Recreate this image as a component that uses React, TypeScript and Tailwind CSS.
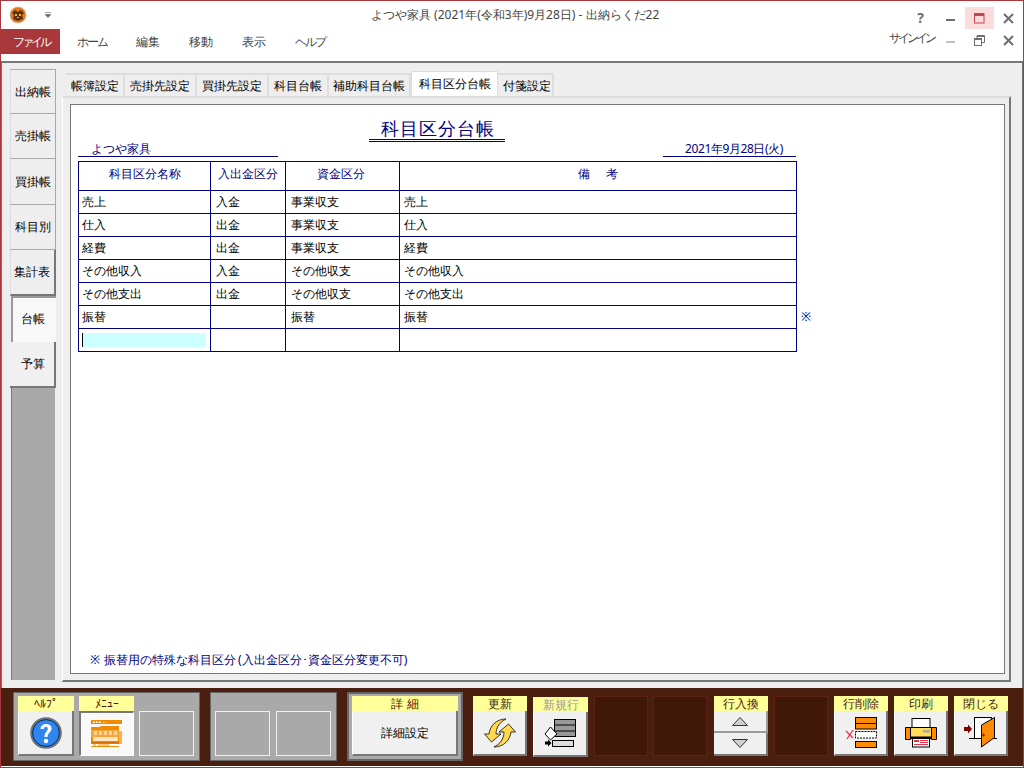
import React from "react"

const font = "[font-family:'Noto_Sans_CJK_JP','Liberation_Sans',sans-serif] [font-feature-settings:'palt']"

const dither = "bg-[repeating-conic-gradient(#f2f2f2_0_25%,#ffffff_0_50%)] bg-[length:2px_2px]"

function AppIcon() {
  return (
    <svg width="18" height="18" viewBox="0 0 18 18">
      <circle cx="9" cy="9" r="8" fill="#e8761a" />
      <circle cx="9" cy="9" r="8" fill="none" stroke="#c9b8a8" strokeWidth="0.8" />
      <path d="M3 7 L6 4 L9 6 L12 4 L15 7 L13 9 L14 13 L9 15 L4 13 L5 9 Z" fill="#5a3210" />
      <path d="M6 8h2v2H6zM10 8h2v2h-2zM8 11h2v1H8z" fill="#f2b640" />
    </svg>
  )
}

function WinGlyph({ type }: { type: string }) {
  if (type === "help") return <span className="text-[14px] font-bold leading-none text-[#6e6e6e] [font-family:'Liberation_Sans',sans-serif]">?</span>
  if (type === "min") return <span className="mt-[3px] block h-[2px] w-[9px] bg-[#6e6e6e]" />
  if (type === "minOff") return <span className="mt-[3px] block h-[2px] w-[9px] bg-[#c0c0c0]" />
  if (type === "close")
    return (
      <svg width="11" height="11" viewBox="0 0 11 11">
        <path d="M1 1 L10 10 M10 1 L1 10" stroke="#6e6e6e" strokeWidth="2" />
      </svg>
    )
  if (type === "max")
    return (
      <svg width="11" height="11" viewBox="0 0 11 11">
        <rect x="0.5" y="0.5" width="9.5" height="9.5" fill="none" stroke="#c2474c" />
        <rect x="0" y="0" width="10" height="3" fill="#c2474c" />
      </svg>
    )
  return (
    <svg width="11" height="11" viewBox="0 0 11 11">
      <rect x="0.5" y="3.5" width="7" height="7" fill="none" stroke="#6e6e6e" />
      <path d="M3 3.5V0.5H10.5V7.5H8" fill="none" stroke="#6e6e6e" />
      <path d="M0.5 4.5h7M3 1.5h7" stroke="#6e6e6e" />
    </svg>
  )
}

function HelpIcon() {
  return (
    <svg width="32" height="32" viewBox="0 0 32 32">
      <circle cx="16" cy="16" r="15" fill="#2e86f0" stroke="#6f6f6f" strokeWidth="1.6" />
      <circle cx="16" cy="16" r="13.4" fill="none" stroke="#111" strokeWidth="0.8" />
      <path d="M10.5 12 C10.5 5.5 21.5 5.5 21.5 11.5 C21.5 15.5 17.5 15.5 17.5 20 H14.5 C14.5 14.5 17.8 14.5 17.8 11.5 C17.8 9 14 9 14 12 Z" fill="#fff" />
      <circle cx="16" cy="24" r="2.2" fill="#fff" />
    </svg>
  )
}

function MenuIcon() {
  return (
    <svg width="32" height="28" viewBox="0 0 32 28">
      <rect x="0" y="0" width="31" height="4" fill="#f08c00" />
      <path d="M2 1.5h2v1.5H2zM5 1.5h2v1.5H5zM8 1.5h2v1.5H8zM12 2h1v1h-1zM14 2h1v1h-1z" fill="#fff" />
      <path d="M0 7h8l2 -1h18v21H0z" fill="#f08c00" />
      <rect x="0" y="10" width="28" height="7" fill="#f7a73a" />
      <path d="M3 11h3v4H3zM8 11h3v4H8zM13 11h3v4h-3zM18 11h3v4h-3zM23 11h3v4h-3z" fill="#fcd596" />
      <rect x="2" y="17" width="25" height="4" fill="#fde6bf" />
      <rect x="0" y="24" width="28" height="2" fill="#fff" />
      <rect x="0" y="22" width="28" height="1.5" fill="#d96f00" />
      <path d="M2 24.500h3v1H2zM7 24.500h11v1H7z" fill="#e88a10" />
      <path d="M28 11h3v13h-3z" fill="#fbb04a" />
    </svg>
  )
}

function RefreshIcon() {
  const arrow = "M22 1 C12 1 6 8 5 16 H0.500 L7.500 24 L17 16 H12 C12 9 16 4 22 1 Z"
  return (
    <svg width="32" height="30" viewBox="0 0 32 30">
      <path d={arrow} fill="#ffd94a" stroke="#222" strokeWidth="0.900" />
      <path d={arrow} transform="rotate(180 16 15)" fill="#ffd94a" stroke="#222" strokeWidth="0.900" />
    </svg>
  )
}

function NewRowIcon() {
  return (
    <svg width="33" height="30" viewBox="0 0 33 30">
      <rect x="10.5" y="0.5" width="21" height="17" fill="#999" stroke="#000" />
      <path d="M10.5 6h21M10.5 12h21" stroke="#000" />
      <path d="M6.5 8 L13 15 L6.5 21 L1 15 Z" fill="#fff" stroke="#000" />
      <rect x="8.5" y="21.5" width="21" height="6" fill="#ddd" stroke="#000" />
      <path d="M1 22.5h3v-2l3.5 3.5l-3.500 3.500v-2h-3z" fill="#000" />
    </svg>
  )
}

function DeleteRowIcon() {
  return (
    <svg width="32" height="31" viewBox="0 0 32 31">
      <rect x="10.500" y="0.500" width="21" height="11.500" fill="#ff8a00" stroke="#000" />
      <path d="M10.500 6.500h21" stroke="#000" />
      <rect x="10.500" y="14.500" width="21" height="6.500" fill="#fff" stroke="#000" strokeDasharray="2 1" />
      <rect x="10.500" y="24.500" width="21" height="6" fill="#ff8a00" stroke="#000" />
      <path d="M1 14 L8 21 M8 13 L2 22" stroke="#f0304a" strokeWidth="1.300" fill="none" />
    </svg>
  )
}

function PrintIcon() {
  return (
    <svg width="32" height="30" viewBox="0 0 32 30">
      <rect x="7" y="0.500" width="18" height="11" fill="#fff" stroke="#000" />
      <path d="M0.500 9.500h5v12h-5z" fill="#ff8a00" stroke="#000" />
      <path d="M26.500 9.500h5v12h-5z" fill="#ff8a00" stroke="#000" />
      <rect x="5.500" y="9.500" width="21" height="11" fill="#ffdb58" stroke="#000" />
      <rect x="18" y="12" width="7" height="2.500" fill="#aaa" />
      <rect x="5.500" y="18.500" width="21" height="2.500" fill="#000" />
      <rect x="7.500" y="20.500" width="17" height="8.500" fill="#fff" stroke="#000" />
      <path d="M9 22h5v2H9zM15 22h8v1h-8zM15 24h8v1h-8zM9 26h14v1H9z" fill="#f0304a" />
    </svg>
  )
}

function DoorIcon() {
  return (
    <svg width="34" height="31" viewBox="0 0 34 31">
      <rect x="10.500" y="0.500" width="17" height="21" fill="#fff" stroke="#000" />
      <path d="M5 21.500h28" stroke="#000" />
      <path d="M30.500 0.500 L17.500 8 V30 L30.500 20.500 Z" fill="#ff8a00" stroke="#000" />
      <path d="M18 18h3M19.500 16.500v3" stroke="#b00000" />
      <path d="M0 10h4V7.500l4 4.500L4 16.500V14H0z" fill="#800000" />
    </svg>
  )
}

function Triangle({ down }: { down?: boolean }) {
  return (
    <svg width="16" height="9" viewBox="0 0 16 9">
      <path d={down ? "M0.500 0.500H15.500L8 8.500Z" : "M0.500 8.500H15.500L8 0.500Z"} fill="#d0d0d0" stroke="#333" />
    </svg>
  )
}

function Btn({ label, width, children, dim }: { label: string; width: string; children: React.ReactNode; dim?: boolean }) {
  return (
    <div className={`flex flex-col ${width}`}>
      <div className={`flex h-[15px] items-center justify-center bg-[#ffff99] text-[12px] leading-none ${dim ? "text-[#999999]" : "text-[#4a1a08]"}`}>{label}</div>
      <div className="flex h-[45px] items-center justify-center border-r-2 border-b-2 border-l border-[#777777] border-l-white bg-[#f0f0f0]">{children}</div>
    </div>
  )
}

function EmptySlot() {
  return <div className="mt-[15px] h-[45px] w-[55px] border border-[#f0f0f0]" />
}

function DarkSlot() {
  return <div className="h-[60px] w-[54px] border border-[#5e2214] bg-[#3f1808]" />
}

const sideTabs = [
  { t: "出納帳", h: "h-[45px] border-t border-t-[#a8a8a8]" },
  { t: "売掛帳", h: "h-[45px]" },
  { t: "買掛帳", h: "h-[46px]" },
  { t: "科目別", h: "h-[45px]" },
  { t: "集計表", h: "h-[46px] border-b-2 border-r-2 border-b-[#777777] border-r-[#777777]" },
]
const topTabs = [
  { t: "帳簿設定", w: "w-[59px]" },
  { t: "売掛先設定", w: "w-[72px]" },
  { t: "買掛先設定", w: "w-[72px]" },
  { t: "科目台帳", w: "w-[60px]" },
  { t: "補助科目台帳", w: "w-[82px]" },
]
const rows = [
  ["売上", "入金", "事業収支", "売上"],
  ["仕入", "出金", "事業収支", "仕入"],
  ["経費", "出金", "事業収支", "経費"],
  ["その他収入", "入金", "その他収支", "その他収入"],
  ["その他支出", "出金", "その他収支", "その他支出"],
  ["振替", "", "振替", "振替"],
]
const cellPad = ["pl-[3px]", "pl-[5px]", "pl-[5px]", "pl-[4px]"]

export default function App() {
  return (
    <div className={`flex h-[768px] w-[1024px] flex-col overflow-hidden border border-[#a8383c] bg-white text-[12px] text-black ${font}`}>
      {/* title bar */}
      <div className="flex h-[28px] shrink-0 items-center">
        <div className="ml-[8px]"><AppIcon /></div>
        <svg className="ml-[18px]" width="6" height="6" viewBox="0 0 6 6">
          <path d="M0 0.500h6M0 2.500h6L3 5.500Z" fill="#666" stroke="#666" strokeWidth="0.600" />
        </svg>
        <div className="ml-[320px] text-[#444444]">よつや家具 (2021年(令和3年)9月28日) - 出納らくだ22</div>
        <div className="ml-auto flex h-[22px] self-end">
          <div className="flex w-[29px] items-center justify-center"><WinGlyph type="help" /></div>
          <div className="flex w-[30px] items-center justify-center"><WinGlyph type="min" /></div>
          <div className="flex w-[29px] items-center justify-center bg-[#fbdcdc]"><WinGlyph type="max" /></div>
          <div className="flex w-[29px] items-center justify-center"><WinGlyph type="close" /></div>
        </div>
      </div>

      {/* menu */}
      <div className="flex h-[32px] shrink-0 items-start">
        <div className="flex h-[25px] w-[59px] items-center justify-center bg-[#a8383c] tracking-[-3px] text-white">ファイル</div>
        <div className="ml-[17px] flex h-[25px] items-center gap-[29px] text-[#444444]">
          <span className="tracking-[-2px]">ホーム</span>
          <span>編集</span>
          <span>移動</span>
          <span>表示</span>
          <span className="tracking-[-2px]">ヘルプ</span>
        </div>
        <div className="ml-auto flex h-[22px] items-center">
          <span className="mr-[1px] -mt-[4px] tracking-[-3px] text-[#444444]">サインイン</span>
          <div className="flex w-[30px] items-center justify-center"><WinGlyph type="minOff" /></div>
          <div className="flex w-[29px] items-center justify-center"><WinGlyph type="restore" /></div>
          <div className="flex w-[29px] items-center justify-center"><WinGlyph type="close" /></div>
        </div>
      </div>

      {/* main */}
      <div className="flex h-[627px] shrink-0 border-x border-t-2 border-[#777777] bg-[#eeeeee] pl-[8px]">
        {/* side tabs */}
        <div className="mt-[6px] flex h-[611px] w-[46px] shrink-0 flex-col">
          {sideTabs.map(x => (
            <div key={x.t} className={`flex items-center justify-center border-r border-b border-l border-[#a8a8a8] border-l-[#dddddd] bg-[#eeeeee] pr-[1px] ${x.h}`}>
              {x.t}
            </div>
          ))}
          <div className={`ml-[1px] flex h-[46px] items-center justify-center border-t-2 border-l-2 border-[#999999] pr-[3px] pb-[2px] ${dither}`}>台帳</div>
          <div className="flex h-[46px] items-center justify-center border-r-2 border-b-2 border-[#777777] bg-[#f0f0f0] pl-[1px]">予算</div>
          <div className="ml-[1px] mr-[1px] flex-1 border-l border-[#777777] bg-[#a9a9a9]" />
        </div>

        {/* right */}
        <div className="ml-[6px] flex h-[620px] w-[949px] flex-col pt-[8px]">
          <div className="flex h-[25px] items-end pl-[4px]">
            {topTabs.map(x => (
              <div key={x.t} className={`flex h-[23px] items-center justify-center border-t-2 border-r-2 border-[#dddddd] bg-[#eeeeee] ${x.w}`}>{x.t}</div>
            ))}
            <div className="-mb-[1px] flex h-[26px] w-[87px] items-center justify-center border-x border-t border-[#dddddd] bg-white pb-[2px]">科目区分台帳</div>
            <div className="flex h-[23px] w-[56px] items-center justify-center border-t-2 border-r-2 border-[#dddddd] bg-[#eeeeee] pl-[4px]">付箋設定</div>
          </div>
          <div className="flex h-[586px] border-t-2 border-r-2 border-b-2 border-l border-[#777777] border-t-[#dddddd] border-l-white pt-[6px] pr-[4px] pb-[6px] pl-[7px]">
            {/* sheet */}
            <div className="flex h-full w-[935px] flex-col border border-[#777777] bg-white pl-[7px] text-[#000080]">
              <div className="ml-[291px] mt-[12px] h-[25px] w-[136px] border-b-[3px] border-double border-[#000080] pl-[2px] text-center text-[18px] leading-[23px] tracking-[1px]">科目区分台帳</div>
              <div className="flex h-[15px] w-[718px] justify-between">
                <div className="w-[200px] border-b border-[#000080] pl-[13px] pt-[1px] leading-[12px]">よつや家具</div>
                <div className="w-[133px] border-b border-[#000080] pl-[22px] pt-[1px] leading-[12px] tracking-[-0.4px]">2021年9月28日(火)</div>
              </div>
              <div className="mt-[4px] flex">
                <table className="w-[719px] table-fixed border-collapse">
                  <colgroup>
                    <col className="w-[132px]" />
                    <col className="w-[75px]" />
                    <col className="w-[114px]" />
                    <col />
                  </colgroup>
                  <thead>
                    <tr className="h-[29px] text-center">
                      <th className="border border-[#000080] pb-[5px] font-normal">科目区分名称</th>
                      <th className="border border-[#000080] pb-[5px] font-normal">入出金区分</th>
                      <th className="border border-[#000080] pb-[5px] pr-[3px] font-normal">資金区分</th>
                      <th className="border border-[#000080] pb-[5px] pl-[2px] font-normal tracking-[2px]">備　考</th>
                    </tr>
                  </thead>
                  <tbody className="text-black">
                    {rows.map((r, i) => (
                      <tr key={i} className="h-[23px]">
                        {r.map((c, j) => (
                          <td key={j} className={`border border-[#000080] leading-none ${cellPad[j]}`}>{c}</td>
                        ))}
                      </tr>
                    ))}
                    <tr className="h-[23px]">
                      <td className="border border-[#000080] pl-[3px]">
                        <div className="h-[14px] w-[124px] border-l border-black bg-[#ccffff]" />
                      </td>
                      <td className="border border-[#000080]" />
                      <td className="border border-[#000080]" />
                      <td className="border border-[#000080]" />
                    </tr>
                  </tbody>
                </table>
                <div className="pl-[4px] pt-[149px] leading-[14px]">※</div>
              </div>
              <div className="mt-auto pb-[6px] pl-[12px] leading-[14px]">
                ※<span className="ml-[4px]">振替用の特殊な科目区分</span><span className="ml-[2px]">(</span>入出金区分･資金区分変更不可<span>)</span>
              </div>
            </div>
          </div>
        </div>
      </div>

      {/* footer */}
      <div className="flex h-[78px] shrink-0 items-start bg-[#4a1f10] pl-[12px] pt-[4px]">
        <div className="flex h-[69px] w-[187px] gap-[5px] border border-[#666666] bg-[#a9a9a9] pl-[4px] pt-[3px]">
          <Btn label="ﾍﾙﾌﾟ" width="w-[56px]"><HelpIcon /></Btn>
          <div className="flex w-[55px] flex-col">
            <div className="flex h-[15px] items-center justify-center bg-[#ffff99] text-[#4a1a08] leading-none">ﾒﾆｭｰ</div>
            <div className={`flex h-[45px] items-center justify-center border-t-2 border-r border-b border-l-2 border-[#777777] border-r-white border-b-white ${dither}`}><MenuIcon /></div>
          </div>
          <EmptySlot />
        </div>
        <div className="ml-[10px] flex h-[69px] w-[127px] gap-[6px] border border-[#666666] bg-[#a9a9a9] pl-[4px] pt-[3px]">
          <EmptySlot />
          <EmptySlot />
        </div>
        <div className="ml-[10px] h-[69px] w-[116px] border-2 border-[#666666] bg-[#a9a9a9] pl-[3px] pt-[2px]">
          <Btn label="詳 細" width="w-[106px]"><span>詳細設定</span></Btn>
        </div>
        <div className="ml-[10px] mt-[4px]"><Btn label="更新" width="w-[54px]"><RefreshIcon /></Btn></div>
        <div className="ml-[6px] mt-[5px]"><Btn label="新規行" width="w-[55px]" dim><NewRowIcon /></Btn></div>
        <div className="ml-[6px] mt-[4px]"><DarkSlot /></div>
        <div className="ml-[5px] mt-[4px]"><DarkSlot /></div>
        <div className="ml-[7px] mt-[4px] flex w-[54px] flex-col">
          <div className="flex h-[15px] items-center justify-center bg-[#ffff99] leading-none text-[#4a1a08]">行入換</div>
          <div className="flex h-[22px] items-center justify-center border-r-2 border-b-2 border-[#999999] bg-[#f0f0f0]"><Triangle /></div>
          <div className="flex h-[23px] items-center justify-center border-r-2 border-b-2 border-[#777777] bg-[#f0f0f0]"><Triangle down /></div>
        </div>
        <div className="ml-[6px] mt-[4px]"><DarkSlot /></div>
        <div className="ml-[6px] mt-[4px]"><Btn label="行削除" width="w-[54px]"><DeleteRowIcon /></Btn></div>
        <div className="ml-[6px] mt-[4px]"><Btn label="印刷" width="w-[54px]"><PrintIcon /></Btn></div>
        <div className="ml-[6px] mt-[4px]"><Btn label="閉じる" width="w-[54px]"><DoorIcon /></Btn></div>
      </div>
    </div>
  )
}
